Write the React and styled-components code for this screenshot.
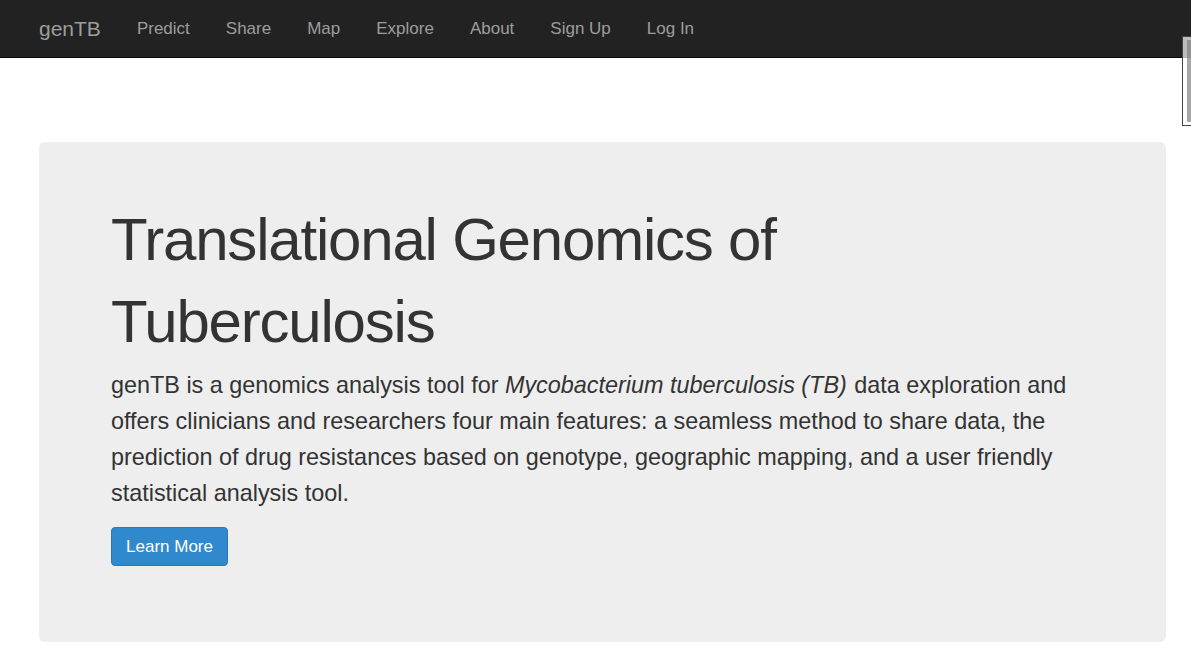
import React from "react";
import styled, { createGlobalStyle } from "styled-components";

const GlobalStyle = createGlobalStyle`
  html, body {
    margin: 0;
    padding: 0;
    background: #fff;
    font-family: "Liberation Sans", Arial, sans-serif;
    color: #333;
  }
`;

const navLinks = ["Predict", "Share", "Map", "Explore", "About", "Sign Up", "Log In"];

const App = () => {
  return (
    <Page>
      <GlobalStyle />
      <NavBar>
        <Brand href="#">genTB</Brand>
        <NavList>
          {navLinks.map((label) => (
            <NavItem key={label}>
              <NavLink href="#">{label}</NavLink>
            </NavItem>
          ))}
        </NavList>
      </NavBar>
      <ScrollThumb>
        <ThumbBar />
      </ScrollThumb>
      <Jumbotron>
        <Title>Translational Genomics of Tuberculosis</Title>
        <Lead>
          genTB is a genomics analysis tool for{" "}
          <em>Mycobacterium tuberculosis (TB)</em> data exploration and offers
          clinicians and researchers four main features: a seamless method to
          share data, the prediction of drug resistances based on genotype,
          geographic mapping, and a user friendly statistical analysis tool.
        </Lead>
        <PrimaryBtn>Learn More</PrimaryBtn>
      </Jumbotron>
    </Page>
  );
};

export default App;

const Page = styled.div`
  position: relative;
  width: 1191px;
  min-height: 650px;
`;

const NavBar = styled.nav`
  height: 58px;
  background: #222;
  border-bottom: 1px solid #080808;
  display: flex;
  align-items: center;
  padding-left: 39px;
  box-sizing: border-box;
`;

const Brand = styled.a`
  font-size: 21px;
  color: #9d9d9d;
  text-decoration: none;
  margin-right: 18px;
`;

const NavList = styled.ul`
  display: flex;
  list-style: none;
  margin: 0;
  padding: 0;
`;

const NavItem = styled.li`
  padding: 0 18px;
`;

const NavLink = styled.a`
  font-size: 17px;
  color: #9d9d9d;
  text-decoration: none;
`;

const ScrollThumb = styled.div`
  position: absolute;
  top: 36px;
  right: 0;
  width: 9px;
  height: 90px;
  box-sizing: border-box;
  border: 1px solid #444;
  border-right: none;
  background: rgba(255, 255, 255, 0.7);
  padding: 3px 0 3px 4px;
`;

const ThumbBar = styled.div`
  height: 100%;
  background: rgba(130, 130, 130, 0.7);
`;

const Jumbotron = styled.section`
  margin: 84px 25px 0 39px;
  height: 500px;
  box-sizing: border-box;
  background: #eee;
  border-radius: 6px;
  padding: 57px 72px 0 72px;
`;

const Title = styled.h1`
  margin: 0;
  font-size: 60px;
  line-height: 82px;
  letter-spacing: -1.2px;
  font-weight: 400;
  color: #333;
  max-width: 700px;
`;

const Lead = styled.p`
  margin: 4px 0 16px;
  font-size: 23.4px;
  line-height: 36px;
  font-weight: 300;
  color: #333;
  max-width: 980px;

  em {
    font-style: italic;
    padding-right: 1px;
  }
`;

const PrimaryBtn = styled.button`
  width: 117px;
  height: 39px;
  background: #3189cd;
  border: 1px solid #2a78b6;
  border-radius: 4px;
  color: #fff;
  font-family: "Liberation Sans", Arial, sans-serif;
  font-size: 17px;
  cursor: pointer;
`;
